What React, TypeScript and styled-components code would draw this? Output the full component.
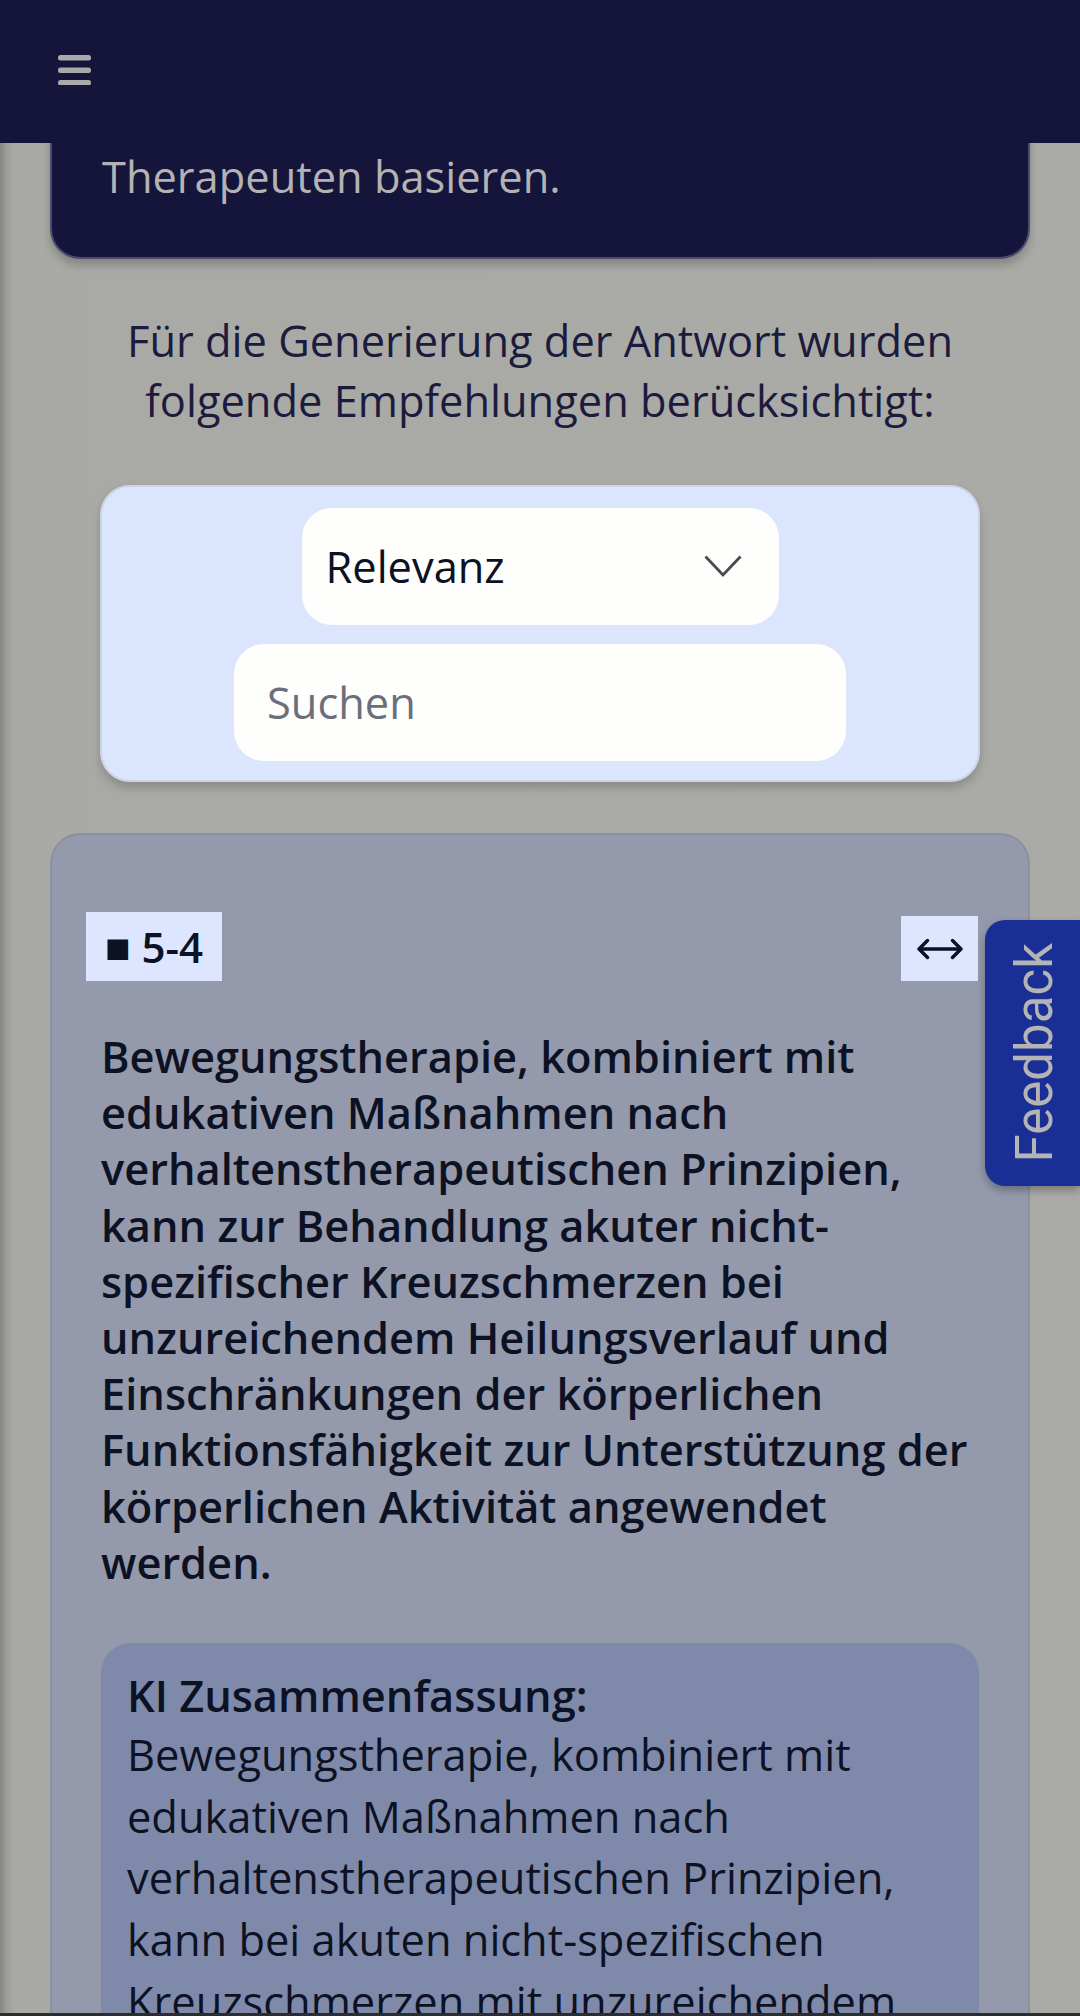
import React from "react";
import styled, { createGlobalStyle } from "styled-components";

const GlobalStyle = createGlobalStyle`
  html, body { margin: 0; padding: 0; }
  body {
    background: linear-gradient(to right, #858582 0px, #9a9b97 6px, #a9aaa5 14px, #aaaba6 100%);
    background-attachment: fixed;
    font-family: "Open Sans", "Noto Sans", sans-serif;
    color: #1c1b3d;
  }
  * { box-sizing: border-box; }
`;

const Header = styled.header`
  position: fixed;
  top: 0;
  left: 0;
  right: 0;
  height: 143px;
  background: #15143a;
  display: flex;
  align-items: center;
  padding-left: 58px;
  z-index: 10;
`;

const MenuButton = styled.button`
  border: 0;
  background: transparent;
  padding: 0;
  margin-top: -4px;
  display: flex;
  cursor: pointer;
`;

const Page = styled.main`
  padding: 0 50px 0 50px;
`;

const InfoCard = styled.section`
  background: #15143a;
  border: 2px solid #4d4c6e;
  border-top: 0;
  border-radius: 0 0 30px 30px;
  box-shadow: 0 6px 10px rgba(0, 0, 0, 0.22);
  padding: 147px 48px 50px 50px;
  color: #b3b3b3;
  font-size: 43.4px;
  line-height: 60px;
`;

const Intro = styled.p`
  margin: 52px 0 54px;
  text-align: center;
  font-size: 43.4px;
  line-height: 60px;
  color: #1c1b3d;
`;

const FilterBox = styled.div`
  margin: 0 50px;
  background: #dce5fe;
  border: 2px solid #ced4e2;
  border-radius: 30px;
  box-shadow: 0 6px 10px rgba(0, 0, 0, 0.18);
  padding: 21px 0 19px;
  display: flex;
  flex-direction: column;
  align-items: center;
  gap: 19px;
`;

const Select = styled.div`
  width: 477px;
  height: 117px;
  background: #fefefd;
  border-radius: 30px;
  display: flex;
  align-items: center;
  justify-content: space-between;
  padding: 0 37px 0 24px;
  font-size: 43.4px;
  color: #0c1223;
`;

const SearchInput = styled.input`
  width: 612px;
  height: 117px;
  background: #fefefd;
  border: 0;
  border-radius: 30px;
  padding: 0 0 0 33px;
  font-family: "Open Sans", "Noto Sans", sans-serif;
  font-size: 43.4px;
  color: #0c1223;
  outline: none;
  &::placeholder { color: #6b6f7b; }
`;

const RecCard = styled.article`
  margin-top: 51px;
  background: #949aac;
  border: 2px solid #8b91a4;
  border-bottom: 0;
  border-radius: 30px 30px 0 0;
  padding-top: 77px;
  padding-bottom: 200px;
`;

const CardHead = styled.div`
  display: flex;
  justify-content: space-between;
  align-items: flex-end;
  padding: 0 50px 0 34px;
`;

const Badge = styled.span`
  display: inline-flex;
  align-items: center;
  height: 69px;
  padding: 0 19px 0 19px;
  background: #dde6fe;
  color: #0c1223;
  font-size: 42px;
  font-weight: 600;
  gap: 11px;
`;

const Square = styled.span`
  font-family: "DejaVu Sans", sans-serif;
  font-size: 27px;
  line-height: 1;
  margin-top: 2px;
`;

const ExpandButton = styled.button`
  width: 77px;
  height: 65px;
  border: 0;
  padding: 0;
  background: #dde6fe;
  display: flex;
  align-items: center;
  justify-content: center;
  cursor: pointer;
`;

const CardBody = styled.div`
  padding: 0 49px 0 49px;
`;

const Recommendation = styled.p`
  margin: 48px 0 52px;
  font-size: 43.4px;
  font-weight: 600;
  line-height: 56.2px;
  color: #0c1223;
`;

const Summary = styled.div`
  background: #7f8aab;
  border-radius: 30px;
  padding: 25px 25px 40px 26px;
  color: #0c1223;
  font-size: 43.4px;
`;

const SummaryTitle = styled.div`
  font-weight: 600;
  line-height: 56px;
`;

const SummaryText = styled.div`
  line-height: 61.7px;
`;

const FeedbackTab = styled.button`
  position: fixed;
  right: 0;
  top: 920px;
  width: 95px;
  height: 266px;
  border: 0;
  padding: 0 0 0 4px;
  background: #1a2f96;
  border-radius: 20px 0 0 20px;
  box-shadow: 0 4px 8px rgba(0, 0, 0, 0.3);
  display: flex;
  align-items: center;
  justify-content: center;
  cursor: pointer;
  z-index: 20;
`;

const FeedbackLabel = styled.span`
  writing-mode: vertical-rl;
  transform: rotate(180deg);
  font-family: Roboto, "Liberation Sans", sans-serif;
  font-size: 51px;
  line-height: 1;
  color: #b4b4b4;
`;

const BottomEdge = styled.div`
  position: fixed;
  left: 0;
  right: 0;
  bottom: 0;
  height: 3px;
  background: #2d2d30;
  z-index: 30;
`;

export default function App() {
  return (
    <>
      <GlobalStyle />
      <Header>
        <MenuButton aria-label="Menü">
          <svg width="33" height="30" viewBox="0 0 33 30">
            <rect x="0" y="0" width="33" height="5.5" rx="2.5" fill="#a9a9a9" />
            <rect x="0" y="12.5" width="33" height="5.5" rx="2.5" fill="#a9a9a9" />
            <rect x="0" y="25" width="33" height="5.5" rx="2.5" fill="#a9a9a9" />
          </svg>
        </MenuButton>
      </Header>
      <Page>
        <InfoCard>Therapeuten basieren.</InfoCard>
        <Intro>
          Für die Generierung der Antwort wurden folgende Empfehlungen berücksichtigt:
        </Intro>
        <FilterBox>
          <Select>
            <span>Relevanz</span>
            <svg width="38" height="23" viewBox="0 0 38 23">
              <path d="M1.5 1.5 L19 20 L36.5 1.5" fill="none" stroke="#4a4a4a" strokeWidth="2.8" />
            </svg>
          </Select>
          <SearchInput placeholder="Suchen" />
        </FilterBox>
        <RecCard>
          <CardHead>
            <Badge>
              <Square>■</Square>5-4
            </Badge>
            <ExpandButton aria-label="Erweitern">
              <svg width="46" height="22" viewBox="0 0 46 22">
                <path d="M2 11 H44" stroke="#0c1223" strokeWidth="3.4" fill="none" />
                <path d="M10.5 2.5 L2 11 L10.5 19.5" stroke="#0c1223" strokeWidth="3.4" fill="none" strokeLinecap="round" strokeLinejoin="round" />
                <path d="M35.5 2.5 L44 11 L35.5 19.5" stroke="#0c1223" strokeWidth="3.4" fill="none" strokeLinecap="round" strokeLinejoin="round" />
              </svg>
            </ExpandButton>
          </CardHead>
          <CardBody>
            <Recommendation>
              Bewegungstherapie, kombiniert mit edukativen Maßnahmen nach
              verhaltenstherapeutischen Prinzipien, kann zur Behandlung akuter
              nicht-spezifischer Kreuzschmerzen bei unzureichendem Heilungsverlauf und
              Einschränkungen der körperlichen Funktionsfähigkeit zur Unterstützung der
              körperlichen Aktivität angewendet werden.
            </Recommendation>
            <Summary>
              <SummaryTitle>KI Zusammenfassung:</SummaryTitle>
              <SummaryText>
                Bewegungstherapie, kombiniert mit edukativen Maßnahmen nach
                verhaltenstherapeutischen Prinzipien, kann bei akuten nicht-spezifischen
                Kreuzschmerzen mit unzureichendem Heilungsverlauf und eingeschränkter
                Funktionsfähigkeit angewendet werden, um die körperliche Aktivität zu
                unterstützen.
              </SummaryText>
            </Summary>
          </CardBody>
        </RecCard>
      </Page>
      <FeedbackTab>
        <FeedbackLabel>Feedback</FeedbackLabel>
      </FeedbackTab>
      <BottomEdge />
    </>
  );
}
